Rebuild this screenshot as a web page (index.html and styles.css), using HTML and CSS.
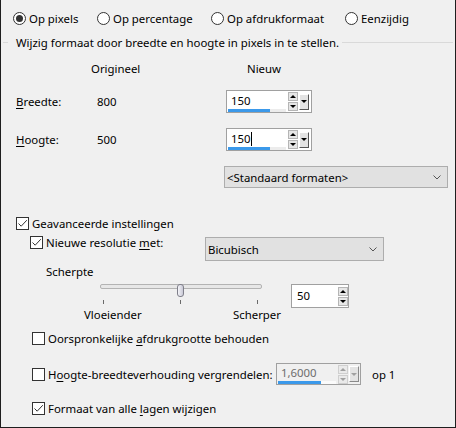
FILE: index.html
```html
<!DOCTYPE html>
<html>
<head>
  <meta charset="utf-8">
  <title>Formaat wijzigen</title>
  <link rel="stylesheet" href="styles.css">
</head>
<body>
<div class="dialog">

  <!-- modus -->
  <div class="modes">
    <label class="radio"><span class="dot on"></span><span>Op pixels</span></label>
    <label class="radio"><span class="dot"></span><span>Op percentage</span></label>
    <label class="radio"><span class="dot"></span><span>Op afdrukformaat</span></label>
    <label class="radio"><span class="dot"></span><span>Eenzijdig</span></label>
  </div>

  <div class="sep">
    <span class="sep-line short"></span>
    <span class="sep-text">Wijzig formaat door breedte en hoogte in pixels in te stellen.</span>
    <span class="sep-line"></span>
  </div>

  <div class="size-row head">
    <span class="c1"></span>
    <span class="c2">Origineel</span>
    <span class="c3 new-head">Nieuw</span>
  </div>

  <div class="size-row">
    <span class="c1"><u>B</u>reedte:</span>
    <span class="c2 orig">800</span>
    <div class="spin">
      <div class="spin-main">
        <span class="spin-val">150</span>
        <span class="bar"><span class="bar-fill" style="width:42px"></span></span>
      </div>
      <div class="spin-btns"><span class="btn up"></span><span class="btn down"></span></div>
      <span class="spin-drop"></span>
    </div>
  </div>

  <div class="size-row">
    <span class="c1"><u>H</u>oogte:</span>
    <span class="c2 orig">500</span>
    <div class="spin">
      <div class="spin-main">
        <span class="spin-val">150<span class="caret"></span></span>
        <span class="bar"><span class="bar-fill" style="width:42px"></span></span>
      </div>
      <div class="spin-btns"><span class="btn up"></span><span class="btn down"></span></div>
      <span class="spin-drop"></span>
    </div>
  </div>

  <div class="size-row presets">
    <div class="combo wide">
      <span>&lt;Standaard formaten&gt;</span>
      <svg width="8" height="5" viewBox="0 0 8 5"><path d="M0.5 0.5 L4 4 L7.5 0.5" stroke="#555" fill="none"/></svg>
    </div>
  </div>

  <!-- geavanceerd -->
  <label class="check adv">
    <span class="box"><svg width="11" height="11" viewBox="0 0 11 11"><path d="M1.5 5.5 L4.2 8.2 L9.8 2.2" stroke="#333" fill="none"/></svg></span>
    <span>Geavanceerde instellingen</span>
  </label>

  <div class="res-row">
    <label class="check res">
      <span class="box"><svg width="11" height="11" viewBox="0 0 11 11"><path d="M1.5 5.5 L4.2 8.2 L9.8 2.2" stroke="#333" fill="none"/></svg></span>
      <span>Nieuwe resolutie <u>m</u>et:</span>
    </label>
    <div class="combo method">
      <span>Bicubisch</span>
      <svg width="8" height="5" viewBox="0 0 8 5"><path d="M0.5 0.5 L4 4 L7.5 0.5" stroke="#555" fill="none"/></svg>
    </div>
  </div>

  <div class="sharp-title">Scherpte</div>
  <div class="sharp-row">
    <div class="slider">
      <div class="rail">
        <span class="track"></span>
        <span class="thumb"></span>
      </div>
      <div class="ticks"><i></i><i></i><i></i></div>
      <div class="slider-labels"><span>Vloeiender</span><span>Scherper</span></div>
    </div>
    <div class="spin small">
      <div class="spin-main">
        <span class="spin-val">50</span>
      </div>
      <div class="spin-btns"><span class="btn up"></span><span class="btn down"></span></div>
    </div>
  </div>

  <label class="check opt keep">
    <span class="box"></span>
    <span>Oorspronkelijke <u>a</u>fdrukgrootte behouden</span>
  </label>

  <div class="ratio-row">
    <label class="check opt ratio">
      <span class="box"></span>
      <span>H<u>o</u>ogte-breedteverhouding vergrendelen:</span>
    </label>
    <div class="spin off">
      <div class="spin-main">
        <span class="spin-val">1,6000</span>
        <span class="bar"><span class="bar-fill" style="width:43px"></span></span>
      </div>
      <div class="spin-btns"><span class="btn up"></span><span class="btn down"></span></div>
      <span class="spin-drop"></span>
    </div>
    <span class="ratio-unit">op 1</span>
  </div>

  <label class="check opt layers">
    <span class="box"><svg width="11" height="11" viewBox="0 0 11 11"><path d="M1.5 5.5 L4.2 8.2 L9.8 2.2" stroke="#333" fill="none"/></svg></span>
    <span>Formaat van alle <u>l</u>agen wijzigen</span>
  </label>

</div>
</body>
</html>
```

FILE: styles.css
```css
body {
  margin: 0;
  padding: 0;
  background-color: #f0f0f0;
}

.dialog {
  width: 456px;
  height: 428px;
  box-sizing: border-box;
  border: 1px solid #1e1e1e;
  border-top: none;
  background-color: #f0f0f0;
  font-family: "Segoe UI", "Noto Sans", sans-serif;
  font-size: 11.4px;
  color: #000;
  overflow: hidden;
  white-space: nowrap;
}

u {
  text-decoration: underline;
  text-underline-offset: 2px;
}

/* radio row */
.modes {
  display: grid;
  grid-template-columns: 84px 114px 134px auto;
  padding: 10px 0 0 12px;
  height: 17px;
  line-height: 17px;
}

.radio {
  display: flex;
  align-items: center;
  gap: 3px;
}

.dot {
  width: 11px;
  height: 11px;
  border: 1px solid #333;
  border-radius: 50%;
  background-color: #fff;
  display: flex;
  align-items: center;
  justify-content: center;
}

.dot.on::after {
  content: "";
  width: 7px;
  height: 7px;
  border-radius: 50%;
  background-color: #333;
}

/* separator with text */
.sep {
  display: flex;
  align-items: center;
  margin: 7px 2px 0 2px;
  height: 16px;
}

.sep-line {
  flex: 1;
  height: 1px;
  background-color: #d9d9d9;
}

.sep-line.short {
  flex: none;
  width: 5px;
}

.sep-text {
  padding: 0 3px 0 8px;
}

/* size rows */
.size-row {
  display: flex;
  align-items: center;
  padding-left: 15px;
  height: 23px;
  margin-top: 15px;
}

.size-row.head {
  height: 16px;
  margin-top: 10px;
}

.size-row.head + .size-row {
  margin-top: 14px;
}

.c1 {
  width: 75px;
}

.c2 {
  width: 135px;
}

.orig {
  padding-left: 6px;
  box-sizing: border-box;
}

.new-head {
  padding-left: 21px;
}

.size-row.presets {
  height: 22px;
  padding-left: 223px;
}

/* spinner field */
.spin {
  display: flex;
  align-items: center;
  width: 86px;
  height: 23px;
  box-sizing: border-box;
  border: 1px solid #a0a0a0;
  background-color: #fff;
}

.spin-main {
  display: flex;
  flex-direction: column;
  width: 58px;
  margin-left: 1px;
  margin-right: 2px;
  padding-top: 2px;
  align-self: stretch;
  box-sizing: border-box;
}

.spin-val {
  padding-left: 3px;
  height: 16px;
  line-height: 16px;
  display: flex;
  align-items: center;
}

.caret {
  display: inline-block;
  width: 1px;
  height: 14px;
  background-color: #000;
}

.bar {
  display: block;
  height: 3px;
  background-color: #ececec;
}

.bar-fill {
  display: block;
  height: 3px;
  background-color: #3b99ea;
}

.spin-btns {
  display: flex;
  flex-direction: column;
  gap: 1px;
}

.btn {
  width: 8px;
  height: 7px;
  border: 1px solid #b5b5b5;
  background-color: #e6e6e6;
  display: flex;
  align-items: center;
  justify-content: center;
}

.btn.up::before {
  content: "";
  border-left: 3px solid transparent;
  border-right: 3px solid transparent;
  border-bottom: 3px solid #000;
}

.btn.down::before {
  content: "";
  border-left: 3px solid transparent;
  border-right: 3px solid transparent;
  border-top: 3px solid #000;
}

.spin-drop {
  width: 8px;
  height: 14px;
  margin-left: 1px;
  border: 1px solid #fff;
  border-right-color: #555;
  border-bottom-color: #555;
  background-color: #e3e3e3;
  display: flex;
  align-items: center;
  justify-content: center;
}

.spin-drop::before {
  content: "";
  border-left: 3px solid transparent;
  border-right: 3px solid transparent;
  border-top: 3px solid #000;
}

.spin.small {
  width: 58px;
  height: 24px;
  margin-top: 4px;
}

.spin.small .spin-main {
  width: 42px;
  justify-content: center;
  padding-top: 0;
  margin-left: 2px;
}

.spin.off {
  width: 85px;
  height: 22px;
  background-color: #f0f0f0;
}

.spin.off .spin-val {
  color: #6d6d6d;
}

.spin.off .spin-main {
  padding-top: 1px;
}

.spin.off .bar {
  background-color: #fbfbfb;
}

.spin.off .btn {
  border-color: #cfcfcf;
  background-color: #eaeaea;
}

.spin.off .btn.up::before {
  border-bottom-color: #a0a0a0;
}

.spin.off .btn.down::before,
.spin.off .spin-drop::before {
  border-top-color: #a0a0a0;
}

.spin.off .spin-drop {
  border-right-color: #8a8a8a;
  border-bottom-color: #8a8a8a;
}

/* combo boxes */
.combo {
  display: flex;
  align-items: center;
  justify-content: space-between;
  box-sizing: border-box;
  border: 1px solid #adadad;
  background-color: #e1e1e1;
  padding: 0 6px 0 2px;
}

.combo.wide {
  width: 224px;
  height: 22px;
}

.combo.method {
  width: 179px;
  height: 24px;
  margin-top: 3px;
}

/* checkboxes */
.check {
  display: flex;
  align-items: center;
  gap: 3px;
  height: 16px;
}

.box {
  width: 11px;
  height: 11px;
  border: 1px solid #333;
  background-color: #fff;
  display: flex;
  align-items: center;
  justify-content: center;
  flex: none;
}

.check.adv {
  margin: 27px 0 0 15px;
}

.res-row {
  display: flex;
  align-items: flex-start;
  margin: 3px 0 0 29px;
}

.check.res {
  width: 175px;
}

.sharp-title {
  margin: 3px 0 0 45px;
  height: 16px;
  line-height: 16px;
}

/* slider */
.sharp-row {
  display: flex;
  align-items: flex-start;
  margin-left: 83px;
  gap: 10px;
}

.slider {
  width: 197px;
}

.rail {
  position: relative;
  height: 13px;
  margin-top: 4px;
}

.track {
  display: block;
  width: 160px;
  height: 3px;
  margin: 4px 0 0 16px;
  border: 1px solid #b3b3b3;
  border-radius: 2px;
  background-color: #e7e7e7;
}

.thumb {
  position: absolute;
  left: 93px;
  top: 0;
  width: 5px;
  height: 11px;
  border: 1px solid #7f7f8a;
  border-radius: 3px;
  background: linear-gradient(to right, #f4f4f8, #c9c9d6);
}

.ticks {
  display: flex;
  gap: 76px;
  padding-left: 19px;
  margin-top: 3px;
  height: 4px;
}

.ticks i {
  width: 1px;
  height: 4px;
  background-color: #6a6a6a;
}

.slider-labels {
  display: flex;
  justify-content: space-between;
  margin-top: 3px;
  height: 16px;
  line-height: 16px;
}

/* lower options */
.check.opt {
  margin-left: 31px;
}

.check.keep {
  margin-top: 7px;
}

.ratio-row {
  display: flex;
  align-items: center;
  margin: 17px 0 0 31px;
  height: 22px;
}

.check.ratio {
  width: 244px;
  margin-left: 0;
}

.ratio-unit {
  margin-left: 11px;
}

.check.layers {
  margin-top: 15px;
}
```
